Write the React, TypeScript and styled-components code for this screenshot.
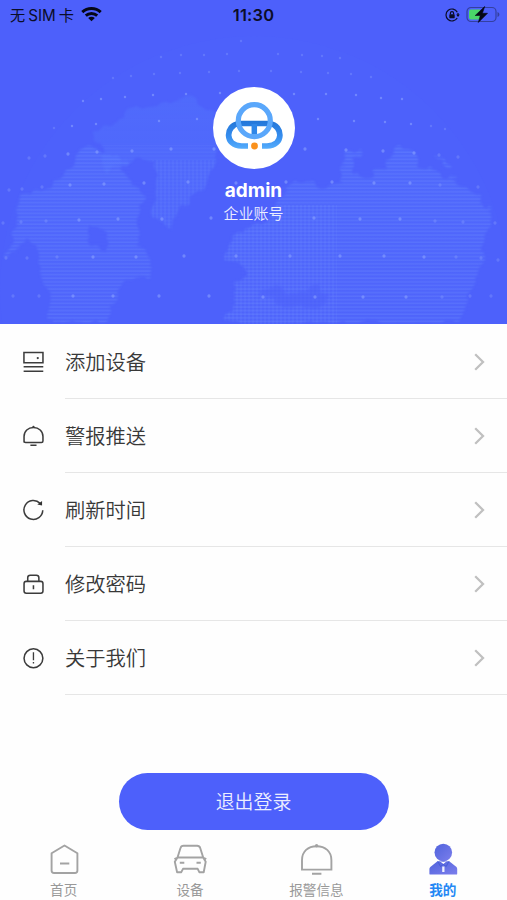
import React from "react";
import styled, { createGlobalStyle } from "styled-components";

const Global = createGlobalStyle`
  * { box-sizing: border-box; }
  body { margin: 0; background: #fff; font-family: Inter, "Noto Sans CJK SC", sans-serif; }
`;

const Screen = styled.main`
  width: 507px;
  height: 900px;
  display: flex;
  flex-direction: column;
  overflow: hidden;
  background: #fefefe;
`;
const Hero = styled.header`
  position: relative;
  height: 324px;
  flex: none;
  background: #4d60fb;
  overflow: hidden;
`;
const MapLayer = styled.svg`
  position: absolute;
  inset: 0;
`;
const HeroContent = styled.div`
  position: relative;
  display: flex;
  flex-direction: column;
  align-items: center;
`;
const StatusBar = styled.div`
  width: 100%;
  height: 30px;
  padding: 0 7px 0 10px;
  display: grid;
  grid-template-columns: 1fr auto 1fr;
  align-items: center;
  color: #0b0d28;
`;
const Carrier = styled.div`
  display: flex;
  align-items: center;
  gap: 7px;
  font-size: 15.2px;
  line-height: 20px;
  white-space: pre;
`;
const CarrierText = styled.span`
  display: flex;
  gap: 3px;
  padding-top: 1px;
`;
const Clock = styled.div`
  font-size: 16.4px;
  font-weight: 600;
  line-height: 20px;
  letter-spacing: 0.2px;
  padding-right: 3px;
`;
const StatusIcons = styled.div`
  display: flex;
  justify-content: flex-end;
  align-items: center;
  gap: 6px;
`;
const Avatar = styled.div`
  width: 82px;
  height: 82px;
  margin-top: 57px;
  border-radius: 50%;
  background: #fff;
`;
const UserName = styled.div`
  margin-top: 10px;
  height: 23px;
  line-height: 23px;
  font-size: 19px;
  font-weight: 700;
  color: #fff;
`;
const UserRole = styled.div`
  height: 23px;
  line-height: 23px;
  font-size: 15px;
  font-weight: 350;
  color: #eceeff;
`;
const Menu = styled.nav`
  display: flex;
  flex-direction: column;
  padding-top: 1px;
`;
const MenuRow = styled.a`
  height: 74.1px;
  padding-left: 22px;
  display: flex;
  align-items: stretch;
  gap: 20.5px;
`;
const RowIcon = styled.svg`
  width: 22.5px;
  height: 22.5px;
  flex: none;
  align-self: center;
  fill: none;
  stroke: #3c3c3c;
  stroke-width: 1.5;
`;
const RowBody = styled.div`
  flex: 1;
  display: flex;
  align-items: center;
  justify-content: space-between;
  padding: 0 21px 0 0;
  border-bottom: 1.5px solid #e6e6e6;
`;
const RowLabel = styled.span`
  font-size: 20.3px;
  line-height: 30px;
  padding-top: 2px;
  font-weight: 350;
  color: #383838;
`;
const Logout = styled.button`
  align-self: center;
  width: 270px;
  height: 57px;
  margin-top: 77.5px;
  padding: 0;
  flex: none;
  border: 0;
  border-radius: 29px;
  background: #4d60fb;
  color: #eceeff;
  font: 350 18.9px/56px "Noto Sans CJK SC", sans-serif;
`;
const TabBar = styled.nav`
  height: 70px;
  display: grid;
  grid-template-columns: repeat(4, 126.4px);
`;
const Tab = styled.a<{ $active?: boolean }>`
  display: flex;
  flex-direction: column;
  align-items: center;
  padding: 12px 0 0 1px;
  font-size: 13.6px;
  line-height: 20px;
  font-weight: ${(p) => (p.$active ? 700 : 400)};
  color: ${(p) => (p.$active ? "#2588f4" : "#999")};
`;
const TabIcon = styled.svg`
  width: 36px;
  height: 36px;
  margin-bottom: 2px;
  fill: none;
  stroke: #a3a3a3;
  stroke-width: 1.9;
  stroke-linejoin: round;
`;

const DOTS: [number, number][] = [
  [161, 57], [181, 55], [204, 55], [227, 54], [241, 41], [278, 54], [302, 55], [322, 56], [340, 58],
  [113, 78], [131, 76], [154, 74], [180, 73], [209, 72], [239, 71], [271, 71], [301, 72], [328, 73], [351, 74], [371, 77],
  [83, 101], [101, 99], [125, 97], [153, 95], [186, 94], [220, 93], [294, 94], [326, 94], [356, 95], [381, 98], [402, 99],
  [54, 128], [72, 126], [96, 124], [159, 121], [197, 119], [318, 119], [354, 121], [385, 122], [411, 124], [431, 126], [445, 129],
  [29, 158], [45, 156], [68, 154], [97, 152], [132, 151], [171, 149], [214, 149], [305, 149], [346, 150], [383, 151], [414, 153], [439, 155], [458, 157],
  [9, 190], [22, 189], [42, 187], [70, 185], [104, 184], [144, 183], [188, 182], [236, 183], [286, 182], [332, 182], [374, 183], [410, 183], [440, 185], [478, 187],
  [3, 223], [21, 222], [46, 221], [79, 220], [118, 219], [162, 219], [211, 218], [314, 218], [360, 219], [400, 219], [435, 221], [463, 222], [495, 223],
  [6, 258], [27, 258], [57, 257], [93, 257], [136, 257], [184, 256], [236, 256], [290, 256], [340, 256], [384, 256], [424, 257], [456, 257], [481, 258], [498, 260],
  [13, 296], [39, 296], [73, 296], [113, 296], [159, 296], [209, 296], [263, 297], [315, 297], [363, 297], [406, 297], [442, 297], [470, 296], [491, 296],
];
const LAND_WEST =
  "M20 195 30 188 40 190 57 186 62 172 70 164 73 153 88 150 94 154 110 155 127 160 124 168 130 184 142 190 144 205 139 213 135 225 140 245 152 260 148 275 128 283 118 295 113 310 105 324H54L48 304 43 285 39 262 32 240 26 236 20 245 8 260 6 255 14 240 18 220ZM91 224 89 238 107 252 108 232Z";
const LAND_NORTH =
  "M97 142 98 134 112 125 120 118 132 112 150 107 163 104 172 99 190 100 200 106 212 110 216 148 210 185 194 195 180 207 174 229 164 232 156 215 152 162 134 155 122 165 110 174 104 160Z";
const LAND_EAST =
  "M290 184 306 181 320 189 337 187 350 182 363 175 375 170 386 168 391 156 402 147 414 151 420 168 435 172 450 178 468 186 484 202 491 214 494 227 488 238 484 250 479 272 471 290 464 307 459 324H224L235 311 235 283 247 277 240 262 227 255 233 230 263 224 267 211Z";
const LAND_ISLE = "M343 151 354 149 362 146 361 155 350 161 354 177 359 184 350 188 340 180ZM438 154 450 159 455 169 443 164Z";

const WorldMap = () => (
  <MapLayer width="507" height="324" viewBox="0 0 507 324">
    <defs>
      <pattern id="lines" width="8" height="3.6" patternUnits="userSpaceOnUse">
        <path d="M0 1H8" stroke="#82a4ff" strokeWidth="1.1" strokeOpacity=".24" />
      </pattern>
      <pattern id="grid" width="4" height="4" patternUnits="userSpaceOnUse">
        <path d="M1 0V4" stroke="#82a4ff" strokeWidth="1" strokeOpacity=".15" />
      </pattern>
      <filter id="coast" x="0" y="0" width="507" height="340" filterUnits="userSpaceOnUse">
        <feTurbulence type="fractalNoise" baseFrequency=".05" numOctaves="3" seed="4" />
        <feDisplacementMap in="SourceGraphic" scale="20" xChannelSelector="R" yChannelSelector="G" />
        <feGaussianBlur stdDeviation="1" />
      </filter>
      <mask id="land">
        <g filter="url(#coast)" fill="#fff" fillRule="evenodd">
          <path d={LAND_WEST} />
          <path d={LAND_EAST} />
          <path d={LAND_ISLE} />
        </g>
      </mask>
      <mask id="north">
        <path d={LAND_NORTH} fill="#fff" filter="url(#coast)" />
      </mask>
      <linearGradient id="fade" x2="0" y2="1">
        <stop offset=".25" stopColor="#5479ff" stopOpacity=".4" />
        <stop offset="1" stopColor="#5a78ff" stopOpacity=".16" />
      </linearGradient>
    </defs>
    <circle cx="254" cy="290" r="254" fill="#5a78ff" opacity=".06" />
    <g mask="url(#land)">
      <rect width="507" height="324" fill="url(#fade)" />
      <rect width="507" height="324" fill="url(#lines)" />
      <rect x="224" y="205" width="113" height="119" fill="url(#grid)" />
    </g>
    <g mask="url(#north)">
      <rect width="507" height="324" fill="url(#fade)" />
      <rect x="152" y="160" width="64" height="75" fill="url(#grid)" />
      <rect y="145" width="507" height="90" fill="url(#lines)" opacity=".45" />
    </g>
    <path d="M258 296 280 284 292 297 319 287 327 303 284 307Z" fill="#4c5ffa" opacity=".5" filter="url(#coast)" />
    {DOTS.map(([x, y], i) => (
      <circle key={i} cx={x} cy={y} r={y > 140 ? 1.65 : 1.25} fill="#8ea5ff" opacity={x < 60 || x > 430 || y < 80 ? 0.32 : 0.55} />
    ))}
  </MapLayer>
);

const Logo = () => (
  <svg width="82" height="82" viewBox="0 0 82 82" fill="none">
    <defs>
      <linearGradient id="cloud" x1="0" y1="34" x2="0" y2="61" gradientUnits="userSpaceOnUse">
        <stop stopColor="#2376d8" />
        <stop offset=".6" stopColor="#378ff0" />
        <stop offset="1" stopColor="#54abfb" />
      </linearGradient>
    </defs>
    <path d="M35 59H28.5C11.5 59 12 38.5 26 36.5H56.5C70.5 38.5 71 59 54 59H49" stroke="url(#cloud)" strokeWidth="5.7" />
    <path d="M41.3 37V50" stroke="#2e86e8" strokeWidth="5.5" />
    <circle cx="41.3" cy="33.7" r="16" stroke="#5aa7fb" strokeWidth="5.2" />
    <circle cx="41.5" cy="59" r="3.4" fill="#fa911c" />
  </svg>
);

const Wifi = () => (
  <svg width="21" height="16" viewBox="0 0 21 16" fill="none" stroke="#050716" strokeWidth="3">
    <path d="M1.3 5.2C6.5.4 14.5.4 19.7 5.2M4.8 8.6C8 5.7 13 5.7 16.2 8.6" />
    <path d="M7.2 10.9C9 9.3 12 9.3 13.8 10.9L10.5 14.3Z" fill="#050716" stroke="none" />
  </svg>
);
const RotationLock = () => (
  <svg width="15" height="14" viewBox="0 0 15 14" fill="none" stroke="#0b0d28" strokeWidth="1.2">
    <path d="M12.3 4.2A6 6 0 1 0 12.2 10M13 5V8" />
    <path d="M11.2 6.4H14.8L13 9Z" fill="#0b0d28" stroke="none" />
    <path d="M5.4 6.5V5.2A1.6 1.6 0 0 1 8.6 5.2V6.5" />
    <rect x="4.3" y="6.2" width="5.4" height="4" rx=".7" fill="#0b0d28" stroke="none" />
  </svg>
);
const Battery = () => (
  <svg width="34" height="18" viewBox="0 0 34 18">
    <rect x="1" y="1.5" width="29" height="14" rx="4" fill="none" stroke="#3440a0" strokeWidth="1.2" />
    <path d="M31.5 6C34 6.7 34 10.3 31.5 11Z" fill="#3440a0" />
    <path d="M5 3.5H14V13.5H5Q3 13.5 3 11.5V5.5Q3 3.5 5 3.5Z" fill="#4ad669" />
    <path d="M18.7.5 9.2 9.5H14.3L12.3 16.5 21.5 7.3H16.4Z" fill="#050716" stroke="#050716" strokeWidth=".6" />
  </svg>
);
const Chevron = () => (
  <svg width="13" height="18" viewBox="0 0 13 18" fill="none" stroke="#c0c0c0" strokeWidth="2.3">
    <path d="M2.2 1.3 10 9 2.2 16.7" />
  </svg>
);

const MENU = [
  {
    label: "添加设备",
    icon: (
      <>
        <path d="M1.9 1.5H20.5V11.5H1.9ZM1.6 15.3H20.8M1.6 19.8H20.8" />
        <circle cx="15.4" cy="6.9" r="1.1" fill="#3c3c3c" stroke="none" />
      </>
    ),
  },
  {
    label: "警报推送",
    icon: (
      <>
        <path d="M2 17.2V11.3C2 6 6 2.5 11.2 2.5S20.5 6 20.5 11.3V15.7Q20.5 17.2 19 17.2H3.5Q2 17.2 2 15.7M8.2 19.8H14.2" />
        <circle cx="11.2" cy="1.9" r="1.1" fill="#3c3c3c" stroke="none" />
      </>
    ),
  },
  {
    label: "刷新时间",
    icon: (
      <>
        <path d="M17.7 4.3A9.2 9.2 0 1 0 20.3 11" />
        <path d="M15 5.3 19.6 2V6.4Z" fill="#333" stroke="none" />
      </>
    ),
  },
  {
    label: "修改密码",
    icon: (
      <>
        <rect x="2" y="8.2" width="18.5" height="11.7" rx="2.2" />
        <path d="M5.6 8V4.6Q5.6 2.1 8.1 2.1H14Q16.5 2.1 16.5 4.6V8M11.2 12V16" />
      </>
    ),
  },
  {
    label: "关于我们",
    icon: (
      <>
        <circle cx="11.2" cy="11" r="9.2" />
        <path d="M11.2 5.2V13M11.2 14.6V16.2" strokeWidth="1.3" />
      </>
    ),
  },
];

const TABS = [
  { label: "首页", icon: <path d="M5.6 11.2 18.5 3.5 31.4 11.2V28.5Q31.4 31 28.9 31H8.1Q5.6 31 5.6 28.5ZM14 21.5H23.3" /> },
  {
    label: "设备",
    icon: (
      <path d="M5.5 15.5 8.5 6Q9.1 3.8 11.5 3.8H25.2Q27.5 3.8 28.2 6L31.2 15.5M5.5 15.5H31.2L33.7 19.8 31.7 30.2H27.3L25.7 26.8H11L9.3 30.2H5.1L2.8 19.8ZM5.7 15.5 2.4 17M31 15.5 34.3 17M7.8 20.8H12.3M24.5 20.8H28.8" />
    ),
  },
  {
    label: "报警信息",
    icon: (
      <>
        <path d="M4 27.6V18.2C4 9.3 10 4.3 18.6 4.3S33.4 9.3 33.4 18.2V27.6ZM14 31.8H23.4" strokeLinejoin="miter" />
        <circle cx="18.6" cy="3.8" r="1.7" fill="#a3a3a3" stroke="none" />
      </>
    ),
  },
  {
    label: "我的",
    active: true,
    icon: (
      <g stroke="none">
        <defs>
          <linearGradient id="person" x1="0" y1="0" x2="1" y2="1">
            <stop stopColor="#5063dc" />
            <stop offset="1" stopColor="#7b7eec" />
          </linearGradient>
        </defs>
        <path d="M12.5 19.2H24.2L31.5 25Q32.2 25.8 32.2 27V31.7Q32.2 32.6 31.3 32.6H5.3Q4.4 32.6 4.4 31.7V27Q4.4 25.8 5.3 25Z" fill="url(#person)" />
        <path d="M12.8 19.4 15.5 24.5 18.3 22.4 21.2 24.5 23.9 19.4" stroke="#4359d5" fill="none" strokeWidth=".9" />
        <path d="M14.7 18.9Q18.3 21 22 18.9L18.3 22Z" fill="#fff" />
        <path d="M17.2 24.5H19.5V30H17.2Z" fill="#eff1ff" />
        <circle cx="18.3" cy="10.5" r="8.8" fill="url(#person)" />
      </g>
    ),
  },
];

export default function App() {
  return (
    <Screen>
      <Global />
      <Hero>
        <WorldMap />
        <HeroContent>
          <StatusBar>
            <Carrier>
              <CarrierText><span>无</span><span>SIM</span><span>卡</span></CarrierText>
              <Wifi />
            </Carrier>
            <Clock>11:30</Clock>
            <StatusIcons>
              <RotationLock />
              <Battery />
            </StatusIcons>
          </StatusBar>
          <Avatar><Logo /></Avatar>
          <UserName>admin</UserName>
          <UserRole>企业账号</UserRole>
        </HeroContent>
      </Hero>
      <Menu>
        {MENU.map((m) => (
          <MenuRow key={m.label}>
            <RowIcon viewBox="0 0 22 22">{m.icon}</RowIcon>
            <RowBody>
              <RowLabel>{m.label}</RowLabel>
              <Chevron />
            </RowBody>
          </MenuRow>
        ))}
      </Menu>
      <Logout>退出登录</Logout>
      <TabBar>
        {TABS.map((t) => (
          <Tab key={t.label} $active={t.active}>
            <TabIcon viewBox="0 0 36 36">{t.icon}</TabIcon>
            {t.label}
          </Tab>
        ))}
      </TabBar>
    </Screen>
  );
}
